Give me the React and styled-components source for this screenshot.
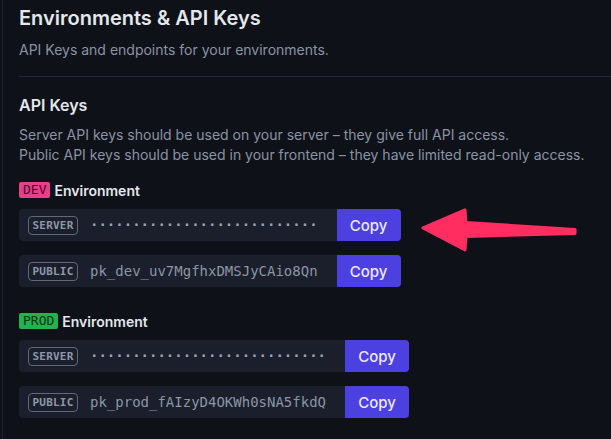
import styled, { createGlobalStyle } from 'styled-components';

const GlobalStyle = createGlobalStyle`
  html, body {
    margin: 0;
    padding: 0;
    background: #0e1118;
  }
  body {
    font-family: Inter, "Noto Sans", sans-serif;
    -webkit-font-smoothing: antialiased;
  }
`;

const Page = styled.div`
  position: relative;
  min-height: 439px;
  margin-left: 2px;
  border-left: 1px solid #1b202b;
  padding: 4px 0 0 16px;
  box-sizing: border-box;
`;

const Title = styled.h1`
  margin: 0;
  font-size: 20px;
  line-height: 28px;
  font-weight: 600;
  color: #e4e7ec;
`;

const Subtitle = styled.p`
  margin: 8px 0 0;
  font-size: 14px;
  line-height: 20px;
  color: #8b93a4;
`;

const Divider = styled.hr`
  margin: 16px 0 0;
  border: none;
  height: 1px;
  background: #232938;
`;

const SectionTitle = styled.h2`
  margin: 16px 0 0;
  font-size: 16px;
  line-height: 24px;
  font-weight: 600;
  color: #e4e7ec;
`;

const Description = styled.p`
  margin: 8px 0 0;
  font-size: 14px;
  line-height: 20px;
  color: #8b93a4;
`;

const EnvBlock = styled.div`
  display: flex;
  flex-direction: column;
  align-items: flex-start;
  gap: 14px;
  margin-top: ${p => p.$top}px;
`;

const EnvHeading = styled.div`
  display: flex;
  align-items: center;
  gap: 4px;
  height: 20px;
  margin-bottom: -5px;
  font-size: 14px;
  font-weight: 600;
  color: #e4e7ec;
`;

const EnvBadge = styled.span`
  height: 16px;
  line-height: 16px;
  padding: 0 4px;
  border-radius: 2px;
  font-family: "DejaVu Sans Mono", monospace;
  font-size: 13px;
  font-weight: 400;
  background: ${p => (p.$prod ? '#22b24f' : '#e5408a')};
  color: ${p => (p.$prod ? '#073618' : '#480c28')};
`;

const KeyRow = styled.div`
  display: inline-flex;
  align-items: center;
  height: 32px;
  padding-left: 9px;
  border-radius: 4px;
  background: #1a1f2b;
  overflow: hidden;
`;

const KeyType = styled.span`
  box-sizing: border-box;
  width: 50px;
  height: 19px;
  line-height: 17px;
  text-align: center;
  border: 1px solid #5f697a;
  border-radius: 4px;
  font-family: "DejaVu Sans Mono", monospace;
  font-size: 11px;
  font-weight: 700;
  letter-spacing: 0.2px;
  color: #8e98a8;
`;

const KeyValue = styled.span`
  margin: 0 19px 0 12px;
  font-family: "DejaVu Sans Mono", monospace;
  font-size: 14px;
  font-weight: ${p => (p.$masked ? 700 : 400)};
  color: ${p => (p.$masked ? '#9aa3b2' : '#8b95a5')};
  white-space: pre;
`;

const CopyButton = styled.button`
  width: 64px;
  height: 32px;
  border: none;
  background: #4c40e0;
  color: #eceaff;
  font-family: Inter, sans-serif;
  font-size: 15px;
  font-weight: 500;
  cursor: pointer;
`;

const Arrow = styled.svg`
  position: absolute;
  left: 400px;
  top: 195px;
`;

const environments = [
  { name: 'DEV', prod: false, top: 15, key: 'pk_dev_uv7MgfhxDMSJyCAio8Qn' },
  { name: 'PROD', prod: true, top: 24, key: 'pk_prod_fAIzyD4OKWh0sNA5fkdQ' },
];

const App = () => {
  return (
    <>
      <GlobalStyle />
      <Page>
        <Title>Environments &amp; API Keys</Title>
        <Subtitle>API Keys and endpoints for your environments.</Subtitle>
        <Divider />
        <SectionTitle>API Keys</SectionTitle>
        <Description>
          Server API keys should be used on your server – they give full API access.
          <br />
          Public API keys should be used in your frontend – they have limited read-only access.
        </Description>
        {environments.map(env => (
          <EnvBlock key={env.name} $top={env.top}>
            <EnvHeading>
              <EnvBadge $prod={env.prod}>{env.name}</EnvBadge>
              Environment
            </EnvHeading>
            <KeyRow>
              <KeyType>SERVER</KeyType>
              <KeyValue $masked>{'·'.repeat(env.key.length)}</KeyValue>
              <CopyButton>Copy</CopyButton>
            </KeyRow>
            <KeyRow>
              <KeyType>PUBLIC</KeyType>
              <KeyValue>{env.key}</KeyValue>
              <CopyButton>Copy</CopyButton>
            </KeyRow>
          </EnvBlock>
        ))}
        <Arrow width="180" height="70" viewBox="0 0 180 70">
          <polygon
            points="20,33 62,15 63,27.5 172,34.5 172,38.5 63,41.5 62,55"
            fill="#ff2d60"
            stroke="#ff2d60"
            strokeWidth="3"
            strokeLinejoin="round"
          />
        </Arrow>
      </Page>
    </>
  );
};

export default App;
